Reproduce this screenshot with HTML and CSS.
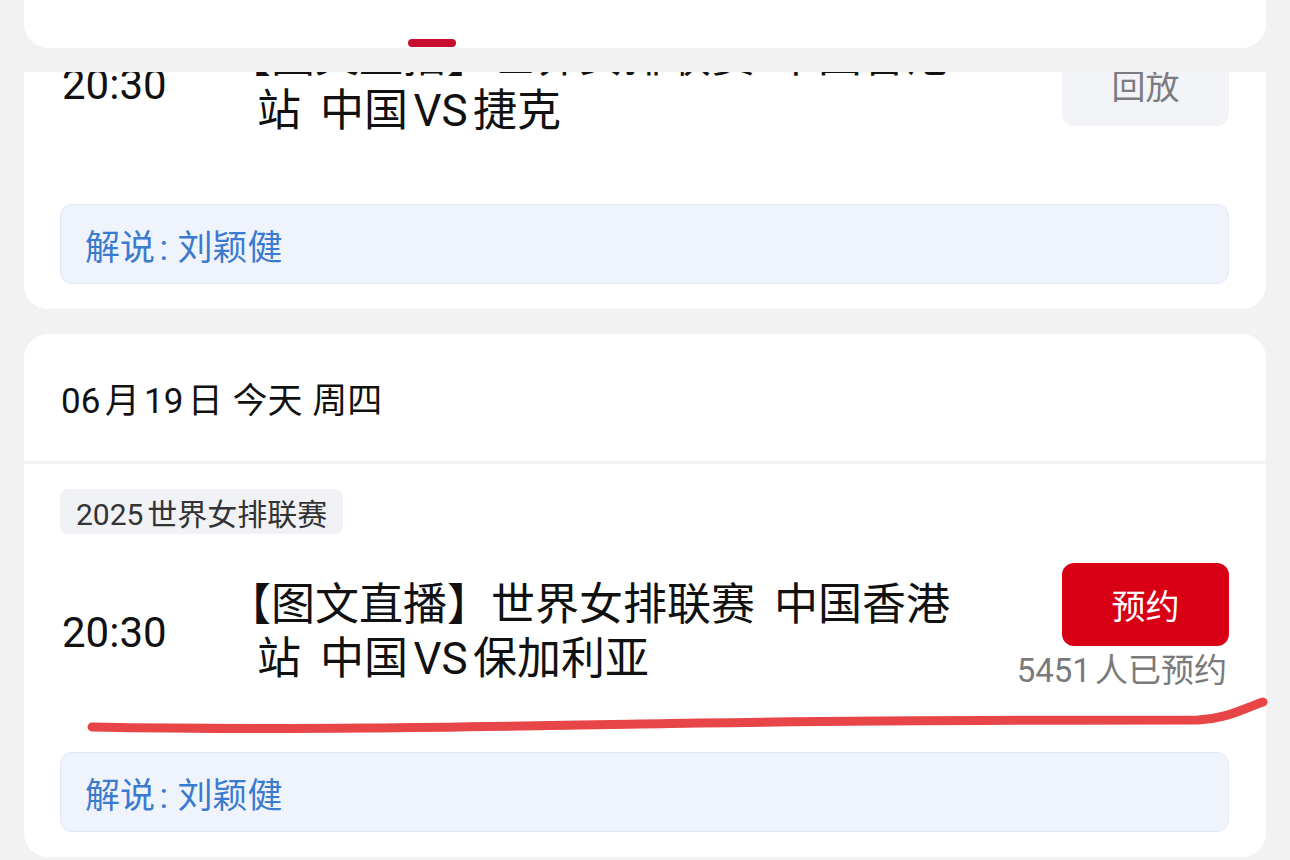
FILE: index.html
```html
<!DOCTYPE html>
<html lang="zh-CN">
<head>
<meta charset="UTF-8">
<meta name="viewport" content="width=device-width, initial-scale=1.0">
<title>赛程</title>
<link rel="stylesheet" href="styles.css">
</head>
<body>
<div class="page">
    <div class="tab-card">
        <div class="tab-indicator"></div>
    </div>
    <div class="gap-strip"></div>
    <div class="viewport">
        <div class="list">
            <div class="day-card scrolled">
                <div class="day-header">06月18日 昨天 周三</div>
                <div class="match">
                    <span class="league-tag">2025世界女排联赛</span>
                    <div class="match-row">
                        <div class="match-time">20:30</div>
                        <div class="match-title">【图文直播】世界女排联赛 中国香港站 中国VS捷克</div>
                        <div class="match-action">
                            <div class="btn btn-replay">回放</div>
                        </div>
                    </div>
                    <div class="commentary">解说: 刘颖健</div>
                </div>
            </div>
            <div class="day-card">
                <div class="day-header">06月19日 今天 周四</div>
                <div class="match">
                    <span class="league-tag">2025世界女排联赛</span>
                    <div class="match-row">
                        <div class="match-time">20:30</div>
                        <div class="match-title">【图文直播】世界女排联赛 中国香港站 中国VS保加利亚</div>
                        <div class="match-action with-count">
                            <div class="btn btn-book">预约</div>
                            <div class="book-count">5451人已预约</div>
                        </div>
                    </div>
                    <div class="commentary">解说: 刘颖健</div>
                </div>
            </div>
        </div>
    </div>
    <svg class="scribble" width="1290" height="860" viewBox="0 0 1290 860">
        <path d="M92 727 C 300 731, 520 726, 700 723 C 900 720, 1050 720, 1198 720 C 1225 719, 1240 710, 1263 702" fill="none" stroke="#e63b3e" stroke-width="9" stroke-linecap="round" stroke-linejoin="round" opacity="0.95"/>
    </svg>
</div>
</body>
</html>
```

FILE: styles.css
```css
body {
    margin: 0;
    background-color: #f2f2f2;
    font-family: Roboto, "Noto Sans CJK SC", sans-serif;
    color: #111;
    text-autospace: normal;
}
.page {
    position: relative;
    width: 1290px;
    height: 860px;
    overflow: hidden;
}
.tab-card {
    margin: 0 24px;
    height: 48px;
    background-color: white;
    border-radius: 0 0 24px 24px;
    display: flex;
    align-items: flex-end;
    padding-left: 384px;
    box-sizing: border-box;
}
.tab-indicator {
    width: 48px;
    height: 8px;
    border-radius: 4px;
    background-color: #c8102e;
    margin-bottom: 1px;
}
.gap-strip {
    height: 24px;
}
.viewport {
    height: 788px;
    overflow: hidden;
}
.list {
    display: flex;
    flex-direction: column;
    gap: 25px;
    padding: 0 24px;
}
.day-card {
    background-color: white;
    border-radius: 24px;
}
.day-card.scrolled {
    margin-top: -286px;
}
.day-header {
    height: 127px;
    display: flex;
    align-items: center;
    padding-left: 37px;
    font-size: 35px;
    border-bottom: 3px solid #f3f3f3;
    word-spacing: 1px;
}
.match {
    display: flex;
    flex-direction: column;
    padding: 25px 37px 25px 36px;
}
.league-tag {
    align-self: flex-start;
    height: 45px;
    display: flex;
    align-items: center;
    padding: 0 16px;
    border-radius: 8px;
    background-color: #f1f2f5;
    color: #333;
    font-size: 30px;
}
.match-row {
    display: flex;
    align-items: center;
    height: 150px;
    margin: 23px 0 45px;
}
.match-time {
    width: 197px;
    flex: none;
    font-size: 42px;
    padding-left: 2px;
    box-sizing: border-box;
}
.match-title {
    width: 700px;
    font-size: 44px;
    line-height: 54px;
    text-indent: -30px;
    word-spacing: 8px;
}
.match-action {
    margin-left: auto;
    display: flex;
    flex-direction: column;
    align-items: flex-end;
}
.match-action.with-count {
    margin-top: -12px;
}
.btn {
    width: 167px;
    height: 83px;
    border-radius: 12px;
    display: flex;
    align-items: center;
    justify-content: center;
    font-size: 34px;
}
.btn-book {
    background-color: #d90016;
    color: white;
}
.btn-replay {
    background-color: #f3f4f8;
    color: #7c7c80;
}
.book-count {
    margin-top: 7px;
    font-size: 33px;
    line-height: 36px;
    color: #7a7a7a;
    margin-right: 2px;
}
.commentary {
    height: 80px;
    box-sizing: border-box;
    display: flex;
    align-items: center;
    padding-left: 24px;
    border: 1px solid #e2e8f2;
    border-radius: 12px;
    background-color: #eff4fc;
    color: #3b7bcf;
    font-size: 35px;
    word-spacing: 1px;
}
.scribble {
    position: absolute;
    top: 0;
    left: 0;
    pointer-events: none;
}
```
